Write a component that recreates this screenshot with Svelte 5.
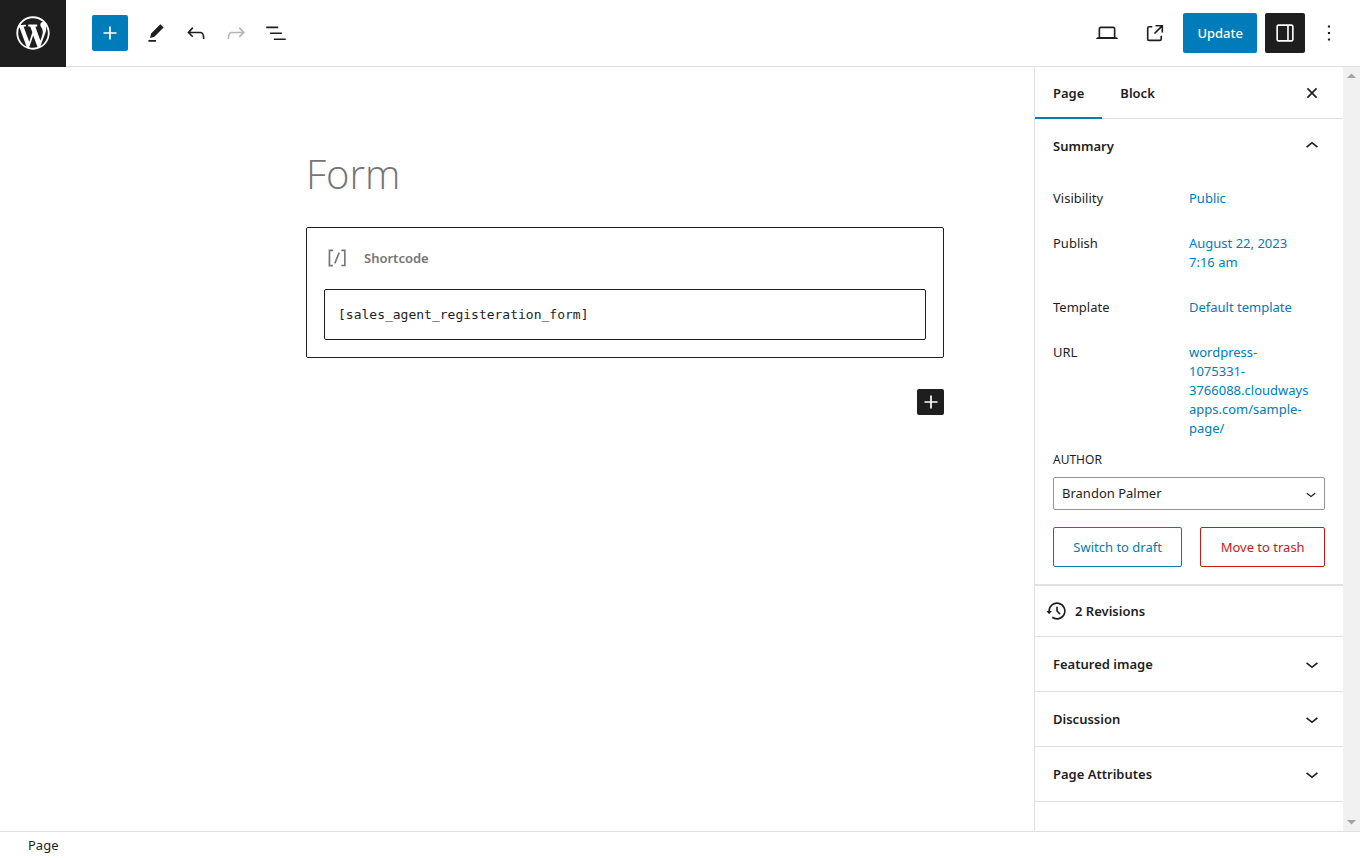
<script>
    let activeTab = "Page";
    let shortcode = "[sales_agent_registeration_form]";
    let author = "Brandon Palmer";

    const tabs = ["Page", "Block"];
    const summary = [
        { label: "Visibility", value: "Public" },
        { label: "Publish", value: "August 22, 2023 7:16 am" },
        { label: "Template", value: "Default template" },
        { label: "URL", value: "wordpress-1075331-3766088.cloudwaysapps.com/sample-page/" },
    ];
    const panels = ["Featured image", "Discussion", "Page Attributes"];

    const icons = {
        plus: "M18 11.2h-5.2V6h-1.6v5.2H6v1.6h5.2V18h1.6v-5.2H18z",
        edit: "m19 7-3-3-8.5 8.5-1 4 4-1L19 7Zm-7 11.5H5V20h7v-1.5Z",
        undo: "M18.3 11.7c-.6-.6-1.4-.9-2.3-.9H6.7l2.9-3.3-1.1-1-4.5 5L8.5 16l1-1-2.7-2.7H16c.5 0 .9.2 1.3.5 1 1 1 3.4 1 4.5v.3h1.5v-.2c0-1.5 0-4.3-1.5-5.7z",
        redo: "M15.6 6.5l-1.1 1 2.9 3.3H8c-.9 0-1.7.3-2.3.9-1.4 1.5-1.4 4.2-1.4 5.6v.2h1.5v-.3c0-1.1 0-3.5 1-4.5.3-.3.7-.5 1.3-.5h9.2L14.5 15l1.1 1.1 4.6-4.6-4.6-5z",
        list: "M3 6h11v1.5H3V6Zm3.5 5.5h11V13h-11v-1.5ZM21 17H10v1.5h11V17Z",
        laptop: "M20.5 16h-.7V8c0-1.1-.9-2-2-2H6.2c-1.1 0-2 .9-2 2v8h-.7c-.8 0-1.5.7-1.5 1.5h20c0-.8-.7-1.5-1.5-1.5zM5.7 8c0-.3.2-.5.5-.5h11.6c.3 0 .5.2.5.5v7.6H5.7V8z",
        external: "M19.5 4.5h-7V6h4.44l-5.97 5.97 1.06 1.06L18 7.06v4.44h1.5v-7Zm-13 1a2 2 0 0 0-2 2v10a2 2 0 0 0 2 2h10a2 2 0 0 0 2-2v-3H17v3a.5.5 0 0 1-.5.5h-10a.5.5 0 0 1-.5-.5v-10a.5.5 0 0 1 .5-.5h3V5.5h-3Z",
        drawer: "M18 4H6c-1.1 0-2 .9-2 2v12c0 1.1.9 2 2 2h12c1.1 0 2-.9 2-2V6c0-1.1-.9-2-2-2zm-4 14.5H6c-.3 0-.5-.2-.5-.5V6c0-.3.2-.5.5-.5h8v13zm4.5-.5c0 .3-.2.5-.5.5h-2.5v-13H18c.3 0 .5.2.5.5v12z",
        more: "M13 19h-2v-2h2v2zm0-6h-2v-2h2v2zm0-6h-2V5h2v2z",
        close: "M12 13.06l3.712 3.713 1.061-1.06L13.061 12l3.712-3.712-1.06-1.06L12 10.938 8.288 7.227l-1.061 1.06L10.939 12l-3.712 3.712 1.06 1.061L12 13.061z",
        up: "M6.5 12.4L12 8l5.5 4.4-.9 1.2L12 10l-4.5 3.6-1-1.2z",
        down: "M17.5 11.6L12 16l-5.5-4.4.9-1.2L12 14l4.5-3.6 1 1.2z",
        backup: "M5.5 12h1.75l-2.5 3-2.5-3H4a8 8 0 113.134 6.35l.907-1.194A6.5 6.5 0 105.5 12zm9.53 1.97l-2.28-2.28V8.5a.75.75 0 00-1.5 0V12a.747.747 0 00.218.529l1.282-.84-1.28.842 2.5 2.5a.75.75 0 101.06-1.061z",
        shortcode: "M16 4.2v1.5h2.5v12.5H16v1.5h4V4.2h-4zM4.2 19.8h4v-1.5H5.8V5.8h2.5V4.2h-4l-.1 15.6zm5.1-3.1l1.4.6 4-10-1.4-.6-4 10z",
        wordpress: "M20 10c0-5.51-4.49-10-10-10C4.48 0 0 4.49 0 10c0 5.52 4.48 10 10 10 5.51 0 10-4.48 10-10zM7.78 15.37L4.37 6.22c.55-.02 1.17-.08 1.17-.08.5-.06.44-1.13-.06-1.11 0 0-1.45.11-2.37.11-.18 0-.37 0-.58-.01C4.12 2.69 6.87 1.11 10 1.11c2.33 0 4.45.87 6.05 2.34-.68-.11-1.65.39-1.65 1.58 0 .74.45 1.36.9 2.1.35.61.55 1.36.55 2.46 0 1.49-1.4 5-1.4 5l-3.03-8.37c.54-.02.82-.17.82-.17.5-.05.44-1.25-.06-1.22 0 0-1.44.12-2.38.12-.87 0-2.33-.12-2.33-.12-.5-.03-.56 1.2-.06 1.22l.92.08 1.26 3.41zM17.41 10c.24-.64.74-1.87.43-4.25.7 1.29 1.05 2.71 1.05 4.25 0 3.29-1.73 6.24-4.4 7.78.97-2.59 1.94-5.2 2.92-7.78zM6.1 18.09C3.12 16.65 1.11 13.53 1.11 10c0-1.3.23-2.48.72-3.59C3.25 10.3 4.67 14.2 6.1 18.09zm4.03-6.63l2.58 6.98c-.86.29-1.76.45-2.71.45-.79 0-1.57-.11-2.29-.33.81-2.38 1.62-4.74 2.42-7.1z",
    };
</script>

{#snippet icon(name)}
    <svg class="icon" viewBox="0 0 24 24" aria-hidden="true"><path d={icons[name]} /></svg>
{/snippet}

<div class="editor">
    <header>
        <a class="logo" href="#pages" aria-label="View Pages">
            <svg viewBox="-2 -2 24 24" aria-hidden="true"><path d={icons.wordpress} /></svg>
        </a>
        <div class="tools">
            <button class="inserter" aria-label="Toggle block inserter">{@render icon("plus")}</button>
            <button class="tool" aria-label="Tools">{@render icon("edit")}</button>
            <button class="tool" aria-label="Undo">{@render icon("undo")}</button>
            <button class="tool" aria-label="Redo" disabled>{@render icon("redo")}</button>
            <button class="tool" aria-label="Document overview">{@render icon("list")}</button>
        </div>
        <div class="settings">
            <button class="square" aria-label="Preview">{@render icon("laptop")}</button>
            <a class="square" href="#view" aria-label="View Page">{@render icon("external")}</a>
            <button class="update">Update</button>
            <button class="square pressed" aria-label="Settings">{@render icon("drawer")}</button>
            <button class="more" aria-label="Options">{@render icon("more")}</button>
        </div>
    </header>

    <div class="body">
        <main>
            <div class="content">
                <h1>Form</h1>
                <div class="block">
                    <label for="shortcode">{@render icon("shortcode")}Shortcode</label>
                    <textarea id="shortcode" rows="1" spellcheck="false" bind:value={shortcode}></textarea>
                </div>
                <button class="appender" aria-label="Add block">{@render icon("plus")}</button>
            </div>
        </main>

        <aside>
            <div class="tabs">
                {#each tabs as tab}
                    <button class="tab" class:active={activeTab === tab} on:click={() => (activeTab = tab)}>{tab}</button>
                {/each}
                <button class="close" aria-label="Close settings">{@render icon("close")}</button>
            </div>
            <section class="summary">
                <h2><button class="toggle">Summary {@render icon("up")}</button></h2>
                <div class="fields">
                    <dl>
                        {#each summary as row}
                            <dt>{row.label}</dt>
                            <dd><a href="#{row.label}">{row.value}</a></dd>
                        {/each}
                    </dl>
                    <label class="author" for="author">Author</label>
                    <div class="select">
                        <select id="author" bind:value={author}>
                            <option>Brandon Palmer</option>
                        </select>
                        {@render icon("down")}
                    </div>
                    <div class="actions">
                        <button class="draft">Switch to draft</button>
                        <button class="trash">Move to trash</button>
                    </div>
                </div>
            </section>
            <section>
                <a class="revisions" href="#revisions">{@render icon("backup")}2 Revisions</a>
            </section>
            {#each panels as panel}
                <section>
                    <h2><button class="toggle">{panel} {@render icon("down")}</button></h2>
                </section>
            {/each}
        </aside>

        <div class="scrollbar" aria-hidden="true">
            <svg viewBox="0 0 17 17"><path d="M4 11h9L8.500 6.500z" /></svg>
            <svg viewBox="0 0 17 17"><path d="M4 6h9l-4.500 4.500z" /></svg>
        </div>
    </div>

    <footer>Page</footer>
</div>

<style>
    :global(body) {
        margin: 0;
    }
    .editor,
    .editor * {
        box-sizing: border-box;
    }
    .editor {
        display: flex;
        flex-direction: column;
        height: 100vh;
        overflow: hidden;
        background: #fff;
        color: #1e1e1e;
        font-family: "Segoe UI", "Noto Sans", "Open Sans", sans-serif;
        font-size: 13px;
        line-height: 19px;
    }
    button,
    select,
    textarea {
        font: inherit;
        color: inherit;
        margin: 0;
    }
    button {
        display: flex;
        align-items: center;
        justify-content: center;
        padding: 0;
        border: none;
        border-radius: 2px;
        background: none;
        cursor: pointer;
    }
    a {
        color: #007cba;
        text-decoration: none;
    }
    .icon {
        width: 26px;
        height: 26px;
        flex-shrink: 0;
        fill: currentColor;
    }

    /* top bar */
    header {
        display: flex;
        align-items: center;
        flex-shrink: 0;
        height: 67px;
        border-bottom: 1px solid #e0e0e0;
    }
    .logo {
        display: flex;
        align-items: center;
        justify-content: center;
        width: 66px;
        height: 67px;
        background: #1e1e1e;
    }
    .logo svg {
        width: 40px;
        height: 40px;
        fill: #fff;
    }
    .tools {
        display: flex;
        align-items: center;
        gap: 4px;
        padding-left: 26px;
    }
    .inserter {
        width: 36px;
        height: 36px;
        margin-right: 6px;
        background: #007cba;
        color: #fff;
    }
    .tool {
        width: 36px;
        height: 36px;
    }
    .tool:disabled {
        color: #b5b5b5;
    }
    .settings {
        display: flex;
        align-items: center;
        gap: 8px;
        margin-left: auto;
        padding-right: 18px;
    }
    .square {
        display: flex;
        align-items: center;
        justify-content: center;
        width: 40px;
        height: 40px;
        color: #1e1e1e;
    }
    .pressed {
        background: #1e1e1e;
        color: #fff;
    }
    .update {
        height: 40px;
        padding: 0 14px;
        background: #007cba;
        color: #fff;
        font-weight: 500;
    }
    .more {
        width: 26px;
        height: 40px;
        margin-left: 3px;
    }

    .body {
        display: flex;
        flex: 1;
        min-height: 0;
    }
    main {
        flex: 1;
        min-width: 0;
        padding: 80px 90px 0;
    }
    .content {
        max-width: 638px;
        margin-left: auto;
    }
    h1 {
        margin: 0;
        padding-bottom: 26px;
        color: #757575;
        font-family: "Segoe UI", "Open Sans", sans-serif;
        font-size: 40px;
        font-weight: 300;
        line-height: 54px;
    }
    .block {
        padding: 17px;
        border: 1px solid #1e1e1e;
        border-radius: 2px;
    }
    .block label {
        display: flex;
        align-items: center;
        gap: 14px;
        height: 26px;
        margin-bottom: 18px;
        color: #757575;
        font-weight: 600;
    }
    textarea {
        display: block;
        width: 100%;
        height: 51px;
        padding: 15px 13px;
        border: 1px solid #1e1e1e;
        border-radius: 2px;
        font-family: Consolas, "DejaVu Sans Mono", monospace;
        outline: none;
        resize: none;
    }
    .appender {
        width: 27px;
        height: 26px;
        margin: 31px 0 0 auto;
        background: #1e1e1e;
        color: #fff;
    }

    /* settings sidebar */
    aside {
        width: 309px;
        overflow: hidden;
        border-left: 1px solid #e0e0e0;
    }
    .tabs {
        display: flex;
        height: 52px;
        border-bottom: 1px solid #e0e0e0;
    }
    .tab {
        height: 52px;
        padding: 0 18px;
        border-radius: 0;
        font-weight: 600;
    }
    .tab.active {
        box-shadow: inset 0 -2px #007cba;
    }
    .close {
        width: 26px;
        margin-left: auto;
        margin-right: 18px;
    }
    section {
        border-bottom: 1px solid #e0e0e0;
    }
    .summary {
        border-bottom-width: 2px;
    }
    h2 {
        margin: 0;
        font-size: inherit;
    }
    .toggle {
        justify-content: space-between;
        width: 100%;
        height: 54px;
        padding: 0 18px;
        font-weight: 600;
    }
    .fields {
        padding: 16px 18px 17px;
    }
    dl {
        display: grid;
        grid-template-columns: 136px 1fr;
        row-gap: 26px;
        margin: 0 0 14px;
    }
    dd {
        margin: 0;
        padding-right: 12px;
        overflow-wrap: anywhere;
    }
    .author {
        display: block;
        margin-bottom: 9px;
        font-size: 12px;
        line-height: 16px;
        text-transform: uppercase;
    }
    .select {
        display: grid;
        align-items: center;
    }
    .select select,
    .select .icon {
        grid-area: 1 / 1;
    }
    .select .icon {
        width: 20px;
        height: 20px;
        justify-self: end;
        margin-right: 4px;
        pointer-events: none;
    }
    select {
        appearance: none;
        width: 100%;
        height: 33px;
        padding: 0 8px;
        border: 1px solid #949494;
        border-radius: 2px;
        background: #fff;
    }
    .actions {
        display: flex;
        gap: 18px;
        margin-top: 17px;
    }
    .actions button {
        flex: 1 1 auto;
        height: 40px;
        border: 1px solid;
    }
    .draft {
        color: #007cba;
    }
    .trash {
        color: #cc1818;
    }
    .revisions {
        display: flex;
        align-items: center;
        gap: 5px;
        height: 50px;
        padding: 0 9px;
        color: #1e1e1e;
        font-weight: 600;
    }
    .scrollbar {
        display: flex;
        flex-direction: column;
        justify-content: space-between;
        width: 17px;
        background: #f1f1f1;
    }
    .scrollbar svg {
        width: 17px;
        height: 17px;
        fill: #a3a3a3;
    }
    footer {
        flex-shrink: 0;
        height: 27px;
        padding: 4px 28px;
        border-top: 1px solid #e0e0e0;
    }
</style>
